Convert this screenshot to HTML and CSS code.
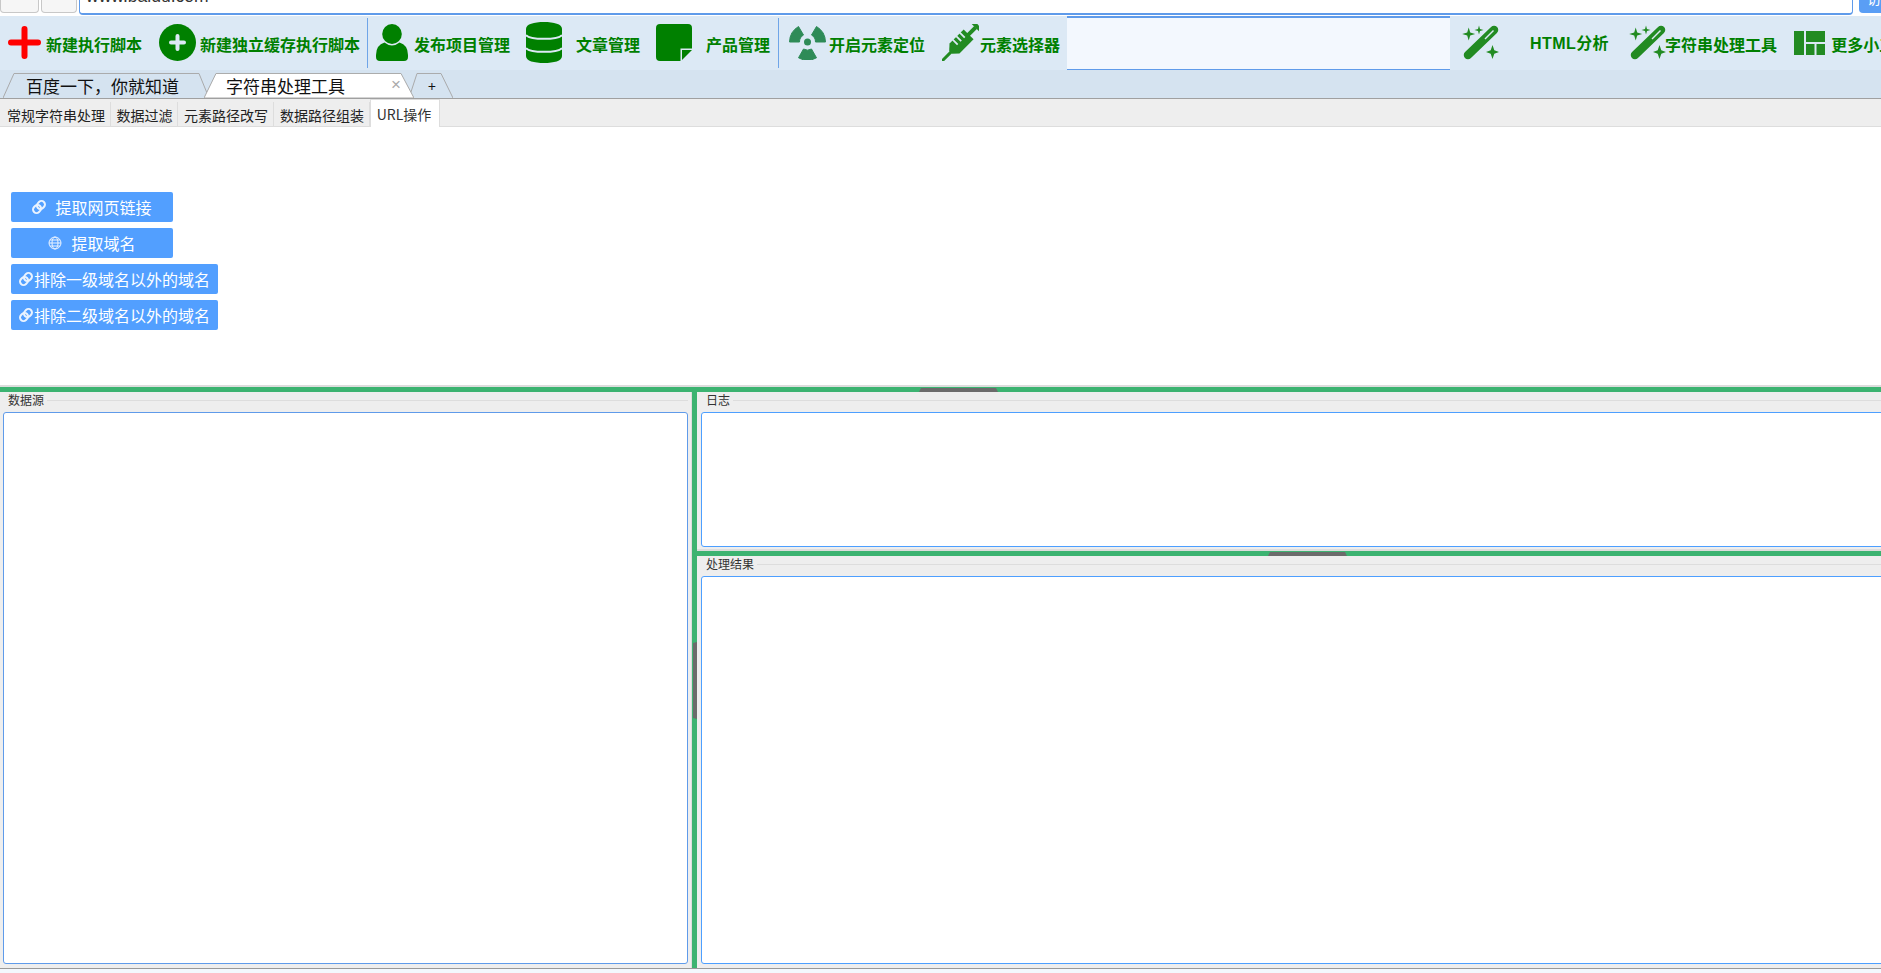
FILE: index.html
```html
<!DOCTYPE html>
<html lang="zh-CN">
<head>
<meta charset="utf-8">
<title>字符串处理工具</title>
<link rel="stylesheet" href="styles.css">
</head>
<body>
<div class="app">
  <div class="addr">
    <span class="nav nav1"></span>
    <span class="nav nav2"></span>
    <div class="url"><span class="url-text">www.baidu.com</span></div>
    <span class="go"><span class="go-text">访问</span></span>
  </div>

  <div class="toolbar">
    <div class="tool t1">
      <svg class="ic" width="33" height="33" viewBox="0 0 33 33"><path d="M16.500 3V30M3 16.500H30" stroke="#f00" stroke-width="6" stroke-linecap="round"/></svg>
      <span>新建执行脚本</span>
    </div>
    <div class="tool t2">
      <svg class="ic" width="37" height="37" viewBox="0 0 37 37"><circle cx="18.500" cy="18.500" r="18.500" fill="#008000"/><path d="M18.500 12V25M12 18.500H25" stroke="#dce9f5" stroke-width="4" stroke-linecap="round"/></svg>
      <span>新建独立缓存执行脚本</span>
    </div>
    <i class="vline v1"></i>
    <div class="tool t3">
      <svg class="ic" width="32" height="37" viewBox="0 0 32 37"><ellipse cx="16" cy="10" rx="9.800" ry="10" fill="#008000"/><path d="M0 31Q0 21 8.500 18.500Q16 24.500 23.500 18.500Q32 21 32 31V33Q32 37 28 37H4Q0 37 0 33Z" fill="#008000"/></svg>
      <span>发布项目管理</span>
    </div>
    <div class="tool t4">
      <svg class="ic" width="36" height="41" viewBox="0 0 36 41"><path d="M0 7C0 2 8 0 18 0S36 2 36 7V34C36 39 28 41 18 41S0 39 0 34Z" fill="#008000"/><path d="M0 13C4 18 32 18 36 13M0 26C4 31 32 31 36 26" fill="none" stroke="#dce9f5" stroke-width="2"/></svg>
      <span>文章管理</span>
    </div>
    <div class="tool t5">
      <svg class="ic" width="36" height="37" viewBox="0 0 36 37"><path d="M4 0H32Q36 0 36 4V24.500H24.500V37H4Q0 37 0 33V4Q0 0 4 0Z" fill="#008000"/><path d="M26 26H36L26 36Z" fill="#008000"/></svg>
      <span>产品管理</span>
    </div>
    <i class="vline v2"></i>
    <div class="tool t6">
      <svg class="ic" width="37" height="34" viewBox="0 0 37 34"><g fill="#2e8b57" stroke="#2e8b57" stroke-linejoin="round"><circle cx="18.500" cy="16" r="3.500" stroke="none"/><path d="M22.500 23L27.500 31.800A18.500 18.500 0 0 1 9.500 31.800L14.500 23A8 8 0 0 0 22.500 23Z"/><path d="M22.500 9L27.500 .5A18.500 18.500 0 0 1 36.500 16H26.500A8 8 0 0 0 22.500 9Z"/><path d="M14.500 9L9.500 .5A18.500 18.500 0 0 0 .5 16H10.500A8 8 0 0 1 14.500 9Z"/></g></svg>
      <span>开启元素定位</span>
    </div>
    <div class="tool t7">
      <svg class="ic" width="37" height="37" viewBox="0 0 37 37"><g transform="rotate(45 18.500 18.500)" fill="#228b22"><path d="M18.500 31V46" stroke="#228b22" stroke-width="3" stroke-linecap="round"/><path d="M11.500 7H25.500V27L20.500 32.500H16.500L11.500 27Z"/><path d="M16.500 -3H20.500V8H16.500Z"/><path d="M11 -6.500H26V-2.500H11Z"/><path d="M11 12H18M11 17H18M11 22H18" stroke="#dce9f5" stroke-width="1.800"/></g></svg>
      <span>元素选择器</span>
    </div>
    <div class="blank"></div>
    <div class="tool t8">
      <svg class="ic" width="37" height="35" viewBox="0 0 37 35"><path d="M6 30L32 5" stroke="#228b22" stroke-width="8.500" stroke-linecap="round"/><path d="M31.500 5.500L23 14" stroke="#dce9f5" stroke-width="1.500"/><path d="M6.700 2.500L8.200 7.500L13.200 9L8.200 10.500L6.700 15.500L5.200 10.500L.2 9L5.200 7.500ZM17 .5L18 4L21.500 5L18 6L17 9.500L16 6L12.500 5L16 4ZM30.500 20L32.300 25.200L37 27L32.300 28.800L30.500 34L28.700 28.800L24 27L28.700 25.200Z" fill="#228b22"/></svg>
      <span class="wide">HTML分析</span>
    </div>
    <div class="tool t9">
      <svg class="ic" width="37" height="35" viewBox="0 0 37 35"><path d="M6 30L32 5" stroke="#228b22" stroke-width="8.500" stroke-linecap="round"/><path d="M31.500 5.500L23 14" stroke="#dce9f5" stroke-width="1.500"/><path d="M6.700 2.500L8.200 7.500L13.200 9L8.200 10.500L6.700 15.500L5.200 10.500L.2 9L5.200 7.500ZM17 .5L18 4L21.500 5L18 6L17 9.500L16 6L12.500 5L16 4ZM30.500 20L32.300 25.200L37 27L32.300 28.800L30.500 34L28.700 28.800L24 27L28.700 25.200Z" fill="#228b22"/></svg>
      <span>字符串处理工具</span>
    </div>
    <div class="tool t10">
      <svg class="ic" width="31" height="24" viewBox="0 0 31 24"><path d="M0 0H10V24H0ZM12 0H31V11H12ZM12 13H20.500V24H12ZM22.500 13H31V24H22.500Z" fill="#228b22"/></svg>
      <span>更多小工具</span>
    </div>
  </div>

  <div class="tabs">
    <div class="tab tab1">
      <svg class="tab-shape" viewBox="0 0 206 26" preserveAspectRatio="none"><path d="M0 26L11 .5H196L206 26" fill="#d5e3f0" stroke="#a8a8a8"/></svg>
      <span class="tab-label">百度一下&#xFF0C;你就知道</span>
    </div>
    <div class="tab tab2">
      <svg class="tab-shape" viewBox="0 0 210 26" preserveAspectRatio="none"><path d="M0 26L12 .5H197L210 26Z" fill="#fff" stroke="#a8a8a8"/></svg>
      <span class="tab-label">字符串处理工具</span>
      <span class="tab-close">×</span>
    </div>
    <div class="tab tab3">
      <svg class="tab-shape" viewBox="0 0 44 26" preserveAspectRatio="none"><path d="M0 26L8 .5H32L44 26" fill="#d5e3f0" stroke="#a8a8a8"/></svg>
      <span class="tab-label">+</span>
    </div>
  </div>

  <div class="subtabs">
    <span class="sub s1">常规字符串处理</span>
    <span class="sub s2">数据过滤</span>
    <span class="sub s3">元素路径改写</span>
    <span class="sub s4">数据路径组装</span>
    <span class="sub active">URL操作</span>
  </div>

  <div class="content">
    <button class="btn b-short">
      <svg width="14" height="14" viewBox="0 0 14 14"><g transform="rotate(-45 7 7)" fill="none" stroke="#eaf3ff" stroke-width="2"><rect x="0" y="3.500" width="8.500" height="7" rx="3.500"/><rect x="5.500" y="3.500" width="8.500" height="7" rx="3.500"/></g></svg>
      <span>提取网页链接</span>
    </button>
    <button class="btn b-short">
      <svg width="14" height="14" viewBox="0 0 14 14"><g fill="none" stroke="#eaf3ff"><circle cx="7" cy="7" r="6"/><ellipse cx="7" cy="7" rx="3" ry="6"/><path d="M1 7H13M2 4H12M2 10H12"/></g></svg>
      <span>提取域名</span>
    </button>
    <button class="btn b-long">
      <svg width="14" height="14" viewBox="0 0 14 14"><g transform="rotate(-45 7 7)" fill="none" stroke="#eaf3ff" stroke-width="2"><rect x="0" y="3.500" width="8.500" height="7" rx="3.500"/><rect x="5.500" y="3.500" width="8.500" height="7" rx="3.500"/></g></svg>
      <span>排除一级域名以外的域名</span>
    </button>
    <button class="btn b-long">
      <svg width="14" height="14" viewBox="0 0 14 14"><g transform="rotate(-45 7 7)" fill="none" stroke="#eaf3ff" stroke-width="2"><rect x="0" y="3.500" width="8.500" height="7" rx="3.500"/><rect x="5.500" y="3.500" width="8.500" height="7" rx="3.500"/></g></svg>
      <span>排除二级域名以外的域名</span>
    </button>
  </div>

  <div class="hsplit"><i class="handle-h hh-main"></i></div>

  <div class="lower">
    <section class="panel left">
      <div class="legend"><span>数据源</span></div>
      <div class="box box-left"></div>
    </section>
    <div class="vsplit"><i class="handle-v"></i></div>
    <div class="right">
      <section class="panel log">
        <div class="legend"><span>日志</span></div>
        <div class="box box-right"></div>
      </section>
      <div class="hsplit"><i class="handle-h hh-right"></i></div>
      <section class="panel result">
        <div class="legend"><span>处理结果</span></div>
        <div class="box box-right"></div>
      </section>
    </div>
  </div>
  <div class="foot"></div>
</div>
</body>
</html>
```

FILE: styles.css
```css
* { box-sizing: border-box; }
html, body { margin: 0; padding: 0; background: #fff; }
body { width: 1881px; height: 973px; overflow: hidden; font-family: "Noto Sans CJK SC", "Liberation Sans", sans-serif; }
.app { display: flex; flex-direction: column; width: 1881px; height: 973px; overflow: hidden; }

/* address row */
.addr { flex: 0 0 16px; display: flex; background: #fff; overflow: hidden; align-items: flex-start; }
.nav { flex: 0 0 auto; height: 13px; background: #f6f6f6; border: 1px solid #c8c8c8; border-top: 0; border-radius: 0 0 4px 4px; }
.nav1 { width: 39px; }
.nav2 { width: 36px; margin-left: 2px; }
.url { flex: 0 0 1774px; height: 15px; margin-left: 2px; border: 1px solid #5f9bea; border-top: 0; border-bottom-width: 2px; border-radius: 0 0 4px 4px; overflow: hidden; padding-left: 6px; }
.url-text { display: block; margin-top: -14px; font: 17.5px/20px "Liberation Sans", sans-serif; color: #333; }
.go { flex: 0 0 22px; height: 13px; margin-left: 6px; background: #5a9ef5; border-radius: 0 0 0 4px; overflow: hidden; color: #fff; padding-left: 8px; }
.go-text { display: block; margin-top: -11px; font-size: 14px; line-height: 18px; white-space: nowrap; }

/* toolbar */
.toolbar { flex: 0 0 54px; display: flex; align-items: stretch; background: #dce9f5; color: #008000; font-size: 16px; font-weight: 700; white-space: nowrap; overflow: hidden; }
.tool { flex: 0 0 auto; display: flex; align-items: center; }
.tool span { line-height: 22px; margin-top: 1px; }
.ic { flex: 0 0 auto; margin-top: -1px; }
.t1 { padding-left: 8px; gap: 5px; }
.t2 { padding-left: 17px; gap: 4px; }
.t3 { padding-left: 8px; gap: 6px; }
.t4 { padding-left: 16px; gap: 14px; }
.t5 { padding-left: 16px; gap: 14px; }
.t6 { padding-left: 10px; gap: 3px; }
.t7 { padding-left: 17px; gap: 1px; }
.t8 { padding-left: 12px; gap: 31px; }
.t9 { padding-left: 19px; gap: 0; }
.t9 svg { margin-right: -1px; }
.t10 { padding-left: 17px; gap: 6px; }
.vline { flex: 0 0 1px; margin: 2px 0 2px 7px; background: #6fa5e8; }
.v2 { margin-left: 8px; }
.blank { flex: 0 0 383px; margin-left: 7px; background: #f3f8fe; border-top: 2px solid #5f9bea; border-bottom: 1px solid #5f9bea; }
.wide { width: 80px; letter-spacing: .4px; font-family: "Liberation Sans", "Noto Sans CJK SC", sans-serif; }

/* browser tabs */
.tabs { flex: 0 0 29px; display: flex; align-items: flex-end; background: #d5e3f0; border-bottom: 1px solid #a0a0a0; padding-left: 3px; }
.tab { position: relative; height: 25px; display: flex; align-items: center; font-size: 17px; color: #111; }
.tab-shape { position: absolute; left: 0; top: 0; width: 100%; height: 100%; }
.tab-label { position: relative; line-height: 24px; white-space: nowrap; }
.tab1 { width: 206px; padding-left: 23px; }
.tab2 { width: 210px; margin-left: -5px; padding-left: 22px; z-index: 2; }
.tab3 { width: 44px; margin-left: -5px; padding-left: 19px; font-size: 14px; z-index: 1; }
.tab-close { position: absolute; left: 187px; top: 2px; color: #aaa; font-size: 17px; line-height: 20px; font-family: "Liberation Sans", sans-serif; }

/* sub tabs */
.subtabs { flex: 0 0 28px; display: flex; align-items: flex-end; background: #eee; border-bottom: 1px solid #ddd; padding-left: 2px; }
.sub { height: 25px; margin-bottom: -1px; padding-top: 3px; border-right: 1px solid #ddd; font-size: 14px; line-height: 20px; color: #222; text-align: center; white-space: nowrap; }
.s1 { width: 109px; }
.s2 { width: 67px; padding-left: 1px; }
.s3 { width: 96px; padding-left: 1px; }
.s4 { width: 96px; padding-left: 1px; }
.active { width: 70px; height: 28px; background: #fff; border: 1px solid #ddd; border-bottom: 0; padding-top: 4px; padding-right: 2px; font-size: 14px; line-height: 20px; color: #333; }

/* main content */
.content { flex: 0 0 260px; display: flex; flex-direction: column; align-items: flex-start; gap: 6px; padding: 65px 0 0 11px; background: #fff; border-bottom: 2px solid #ddd; }
.btn { display: flex; align-items: center; justify-content: center; height: 30px; padding: 0; border: 0; border-radius: 2px; background: #529fff; color: #fff; font: 16px/22px "Noto Sans CJK SC", sans-serif; }
.b-short { width: 162px; gap: 9px; }
.b-long { width: 207px; gap: 1px; }

/* splitters */
.hsplit { position: relative; flex: 0 0 5px; background: #3cb371; }
.handle-h { position: absolute; top: 1px; width: 79px; height: 4px; background: #6b6b6b; clip-path: polygon(2px 0, 77px 0, 100% 100%, 0 100%); }
.hh-main { left: 919px; }
.hh-right { left: 571px; }
.vsplit { position: relative; flex: 0 0 5px; background: #3cb371; }
.handle-v { position: absolute; left: 1px; top: 250px; width: 4px; height: 77px; background: #6b6b6b; clip-path: polygon(0 1px, 100% 0, 100% 100%, 0 calc(100% - 1px)); }

/* lower panels */
.lower { flex: 0 0 576px; display: flex; overflow: hidden; background: #eee; }
.panel { display: flex; flex-direction: column; background: #eee; }
.left { flex: 0 0 692px; padding: 0 3px 4px 3px; border-right: 1px solid #ddd; }
.right { flex: 0 0 1184px; display: flex; flex-direction: column; overflow: hidden; }
.log { flex: 0 0 159px; padding: 0 0 2px 4px; border-bottom: 2px solid #ddd; }
.result { flex: 1 1 0; padding: 0 0 4px 4px; }
.legend { flex: 0 0 16px; margin-bottom: 4px; display: flex; align-items: center; font-size: 12px; line-height: 16px; color: #333; padding-left: 5px; }
.legend span { padding-right: 3px; }
.legend::after { content: ""; flex: 1 1 auto; height: 1px; background: #ddd; }
.box { flex: 1 1 auto; background: #fff; border: 1px solid #5f9bea; border-radius: 3px; }
.box-right { margin-right: -10px; border-color: #4d9fff; }

.foot { flex: 0 0 5px; background: #f3f8fe; border-top: 1px solid #999; }
```
